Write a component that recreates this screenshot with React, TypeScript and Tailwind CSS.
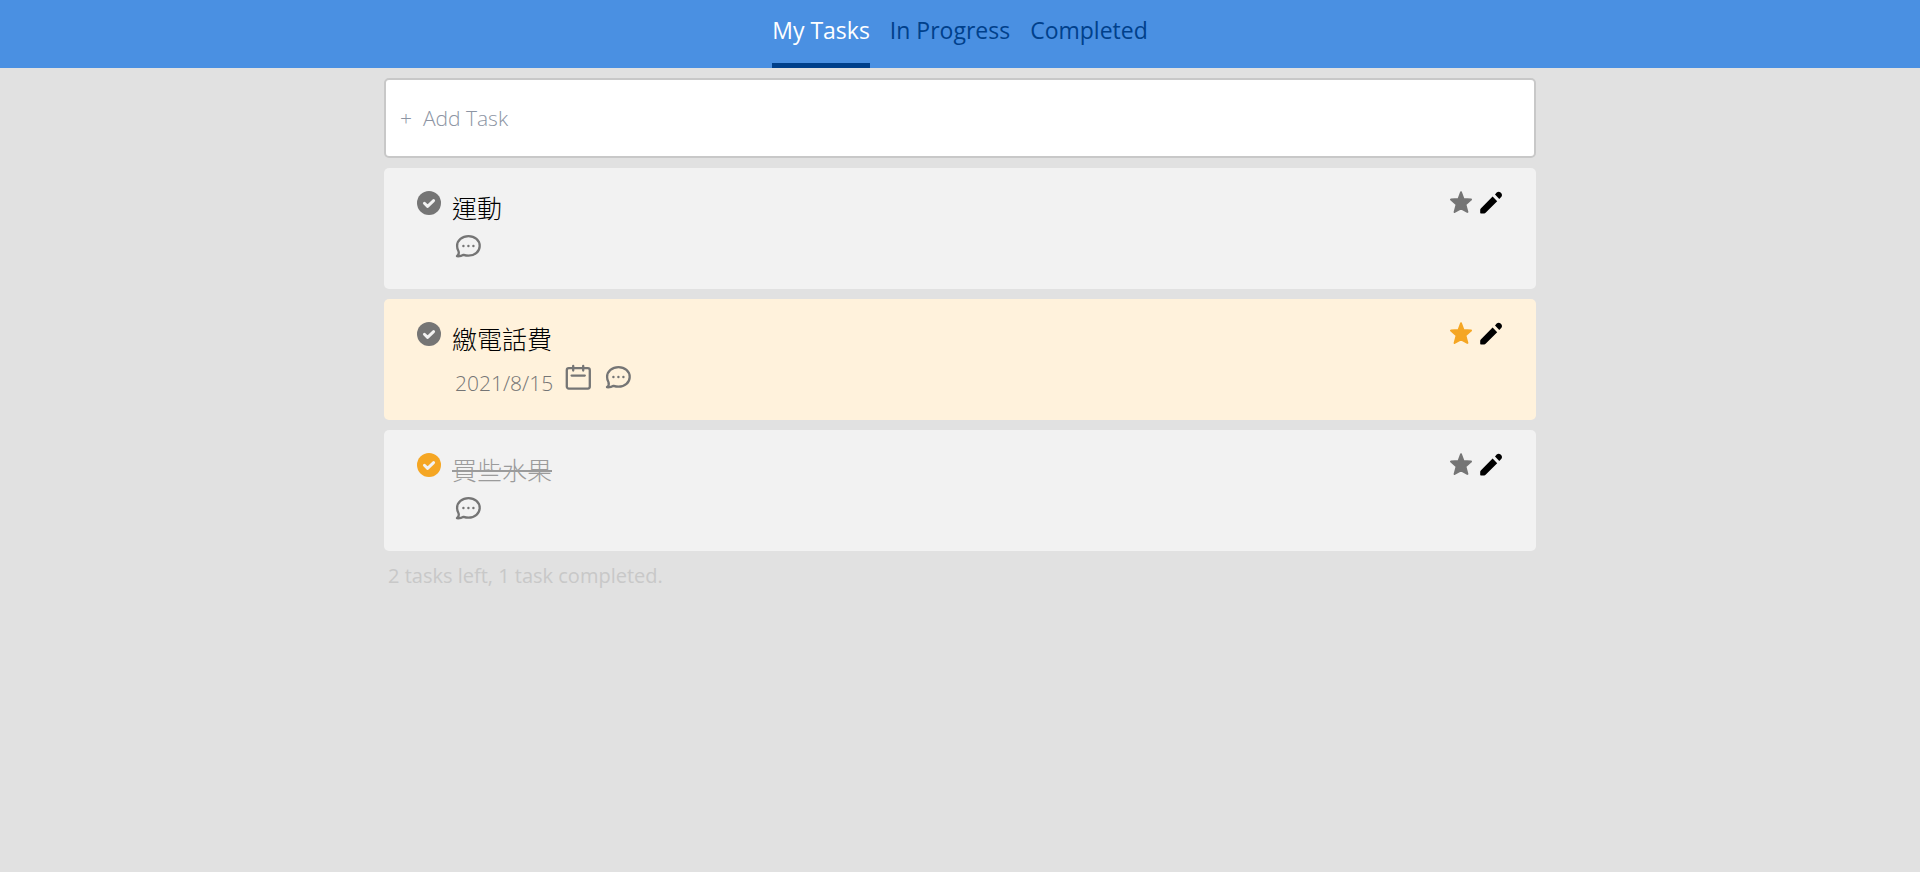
import { useState } from "react";

type Task = {
  id: number;
  title: string;
  date?: string;
  starred: boolean;
  done: boolean;
};

const initialTasks: Task[] = [
  { id: 1, title: "運動", starred: false, done: false },
  { id: 2, title: "繳電話費", date: "2021/8/15", starred: true, done: false },
  { id: 3, title: "買些水果", starred: false, done: true },
];

const tabs = ["My Tasks", "In Progress", "Completed"];

function CheckIcon() {
  return (
    <svg viewBox="0 0 24 24" className="size-6" aria-hidden="true">
      <circle cx="12" cy="12" r="12" fill="currentColor" />
      <path d="M7.4 12.2l3.2 3.2 6-5.8" fill="none" stroke="#f2f2f2" strokeWidth="2.9" strokeLinecap="round" strokeLinejoin="round" />
    </svg>
  );
}

function StarIcon() {
  return (
    <svg viewBox="0 0 24 24" className="size-6" aria-hidden="true">
      <path
        d="M12 1.3L14.5 8.1L22 8.6L16.4 13.4L18.4 20.9L12 17.3L5.6 20.9L7.6 13.4L2 8.6L9.5 8.1Z"
        fill="currentColor"
        stroke="currentColor"
        strokeWidth="2"
        strokeLinejoin="round"
      />
    </svg>
  );
}

function PencilIcon() {
  return (
    <svg viewBox="0 0 24 24" className="size-6" fill="currentColor" aria-hidden="true">
      <path d="M13.6 5.6L18.2 10.2L6.6 21.8Q6 22.4 5.2 22.4H1.9Q1.2 22.4 1.2 21.7V18.8Q1.2 18 1.8 17.4Z" />
      <path d="M16 3.4L17.7 1.6Q19.6 0 21.6 1.6Q23.9 3.8 22.4 5.8L20.3 7.9Z" />
    </svg>
  );
}

function CommentIcon() {
  return (
    <svg viewBox="0 0 26 26" className="size-[26px]" aria-hidden="true">
      <path
        d="M2 23.2C3.8 21.6 4.2 19.8 3.4 18C2.5 16.4 2.1 14.7 2.1 12.9C2.1 7.4 7.2 3.1 13.5 3.1C19.8 3.1 24.7 7.4 24.7 12.9C24.7 18.4 19.8 22.7 13.5 22.7C11.7 22.7 10 22.3 8.6 21.8C6.7 22.9 4.4 23.4 2 23.2Z"
        fill="none"
        stroke="currentColor"
        strokeWidth="2.3"
        strokeLinejoin="round"
      />
      <g fill="currentColor">
        <circle cx="8.4" cy="13" r="1.2" />
        <circle cx="13.4" cy="13" r="1.2" />
        <circle cx="18.4" cy="13" r="1.2" />
      </g>
    </svg>
  );
}

function CalendarIcon() {
  return (
    <svg viewBox="0 0 26 26" className="size-[26px]" fill="none" stroke="currentColor" strokeWidth="2.3" strokeLinecap="round" aria-hidden="true">
      <rect x="1.8" y="4.2" width="23" height="20.4" rx="2" />
      <path d="M8.2 2V6.6M18.2 2V6.6M6.6 11.6H19.8" />
    </svg>
  );
}

function TaskCard({ task, onChange }: { task: Task; onChange: (t: Task) => void }) {
  return (
    <li className={`flex items-start rounded-[5px] px-[33px] pt-[23px] pb-[18px] ${task.starred ? "bg-[#fff2dc]" : "bg-[#f2f2f2]"}`}>
      <label className={`cursor-pointer ${task.done ? "text-[#f5a623]" : "text-[#757575]"}`}>
        <input
          type="checkbox"
          className="sr-only"
          aria-label={task.title}
          checked={task.done}
          onChange={() => onChange({ ...task, done: !task.done })}
        />
        <CheckIcon />
      </label>
      <div className="ml-[11px] flex-1">
        <h2
          className={`text-[25px] leading-[34px] font-light ${task.done ? "text-[#9b9b9b] line-through decoration-2" : "text-black"}`}
        >
          {task.title}
        </h2>
        <div className="mt-2 flex min-h-[38px] items-start gap-[14px] pl-[3px] text-[#757575]">
          {task.date && (
            <div className="flex gap-3">
              <time className="text-[21px] leading-[38px] font-light">{task.date}</time>
              <CalendarIcon />
            </div>
          )}
          <CommentIcon />
        </div>
      </div>
      <div className="flex gap-[6px]">
        <button
          type="button"
          aria-label="Star"
          aria-pressed={task.starred}
          onClick={() => onChange({ ...task, starred: !task.starred })}
          className={`cursor-pointer ${task.starred ? "text-[#f5a623]" : "text-[#757575]"}`}
        >
          <StarIcon />
        </button>
        <button type="button" aria-label="Edit" className="cursor-pointer text-black">
          <PencilIcon />
        </button>
      </div>
    </li>
  );
}

export default function App() {
  const [tasks, setTasks] = useState(initialTasks);
  const [active, setActive] = useState("My Tasks");
  const update = (next: Task) => setTasks(tasks.map((t) => (t.id === next.id ? next : t)));
  const done = tasks.filter((t) => t.done).length;
  const left = tasks.length - done;

  return (
    <div
      lang="zh-TW"
      className="min-h-screen bg-[#e1e1e1] font-['Open_Sans','Noto_Sans_CJK_TC',sans-serif]"
    >
      <header className="bg-[#4a90e2]">
        <nav className="flex justify-center gap-5">
          {tabs.map((tab) => (
            <a
              key={tab}
              href="#"
              onClick={() => setActive(tab)}
              className={`border-b-5 pt-3 pb-[15px] text-[23px] leading-9 ${
                tab === active ? "border-[#00408b] text-white" : "border-transparent text-[#00408b]"
              }`}
            >
              {tab}
            </a>
          ))}
        </nav>
      </header>
      <main className="mx-auto w-3/5 pt-[10px]">
        <input
          type="text"
          aria-label="Add Task"
          placeholder={"+\u00a0\u00a0Add Task"}
          className="block h-20 w-full rounded-[5px] border-2 border-[#c8c8c8] bg-white px-[14px] text-[21px] font-light outline-none placeholder:text-[#8c94a3]"
        />
        <ul className="mt-[10px] flex flex-col gap-[10px]">
          {tasks.map((t) => (
            <TaskCard key={t.id} task={t} onChange={update} />
          ))}
        </ul>
        <p className="mt-[10px] px-1 text-[20px] leading-[30px] text-[#c8c8c8]">
          {left} tasks left, {done} task completed.
        </p>
      </main>
    </div>
  );
}
